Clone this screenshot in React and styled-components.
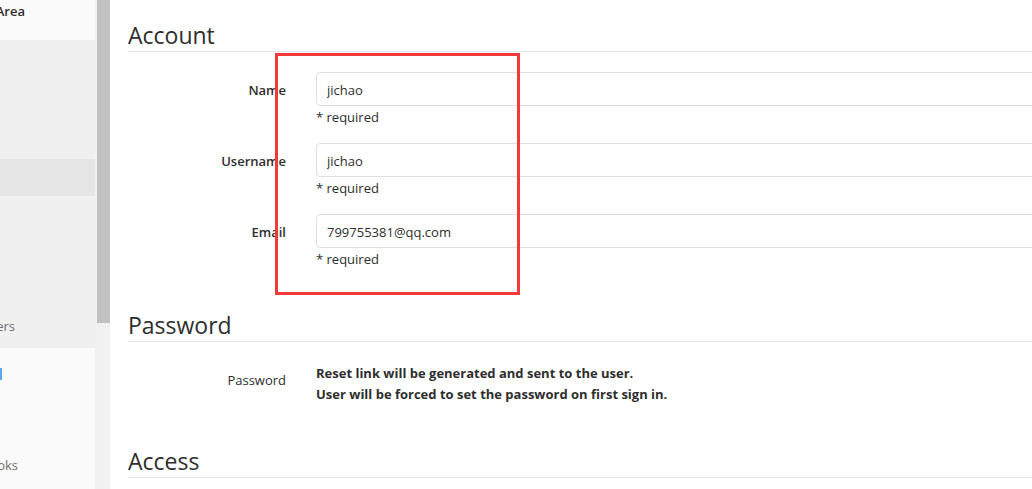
import styled, { createGlobalStyle } from "styled-components";

const GlobalStyle = createGlobalStyle`
  html, body {
    margin: 0;
    padding: 0;
    background: #fff;
  }
  body {
    font-family: "Open Sans", "Noto Sans", sans-serif;
    font-size: 13px;
    color: #2e2e2e;
  }
`;

function App() {
  return (
    <>
      <GlobalStyle />
      <Page>
        <Sidebar>
          <SideHeader>
            <SideLabel $end={25} $bold>
              Admin Area
            </SideLabel>
          </SideHeader>
          <SubMenu>
            <SubSpacer $h={119} />
            <ActiveRow />
            <SubSpacer $h={111} />
            <SideLabel $end={15} $h={38}>
              Gitaly Servers
            </SideLabel>
            <SubSpacer $h={3} />
          </SubMenu>
          <SideRest>
            <BlueMark />
            <SubSpacer $h={66} />
            <SideLabel $end={18} $h={38}>
              System Hooks
            </SideLabel>
          </SideRest>
        </Sidebar>
        <Scrollbar>
          <Thumb />
        </Scrollbar>
        <Main>
          <Section>
            <Heading>Account</Heading>
            <Row>
              <Label>Name</Label>
              <Field>
                <Input defaultValue="jichao" />
                <Help>* required</Help>
              </Field>
            </Row>
            <Row>
              <Label>Username</Label>
              <Field>
                <Input defaultValue="jichao" />
                <Help>* required</Help>
              </Field>
            </Row>
            <Row>
              <Label>Email</Label>
              <Field>
                <Input defaultValue="799755381@qq.com" />
                <Help>* required</Help>
              </Field>
            </Row>
          </Section>
          <Section>
            <Heading>Password</Heading>
            <Row>
              <Label $light>Password</Label>
              <Note>
                Reset link will be generated and sent to the user.
                <br />
                User will be forced to set the password on first sign in.
              </Note>
            </Row>
          </Section>
          <Section>
            <Heading>Access</Heading>
          </Section>
        </Main>
        <Highlight />
      </Page>
    </>
  );
}

export default App;

const Page = styled.div`
  position: relative;
  display: flex;
  width: 100vw;
  height: 100vh;
  overflow: hidden;
`;

const Sidebar = styled.div`
  display: flex;
  flex-direction: column;
  flex: 0 0 95px;
  width: 95px;
  min-width: 0;
  overflow: hidden;
  background: #fafafa;
`;

const SideHeader = styled.div`
  height: 40px;
  background: #fafafa;
`;

const SideLabel = styled.div`
  display: flex;
  justify-content: flex-end;
  align-items: ${(p) => (p.$h ? "center" : "flex-start")};
  height: ${(p) => (p.$h ? `${p.$h}px` : "auto")};
  padding-right: ${(p) => 95 - p.$end}px;
  overflow: hidden;
  white-space: nowrap;
  font-size: 13px;
  line-height: 22px;
  font-weight: ${(p) => (p.$bold ? 600 : 400)};
  color: ${(p) => (p.$bold ? "#2e2e2e" : "#707070")};
`;

const SubMenu = styled.div`
  display: flex;
  flex-direction: column;
  background: #f0f0f0;
`;

const SubSpacer = styled.div`
  height: ${(p) => p.$h}px;
  flex-shrink: 0;
`;

const ActiveRow = styled.div`
  height: 37px;
  flex-shrink: 0;
  background: #e6e6e6;
`;

const SideRest = styled.div`
  display: flex;
  flex-direction: column;
  flex: 1;
  padding-top: 20px;
`;

const BlueMark = styled.div`
  width: 2px;
  height: 12px;
  flex-shrink: 0;
  background: #5fa8e8;
`;

const Scrollbar = styled.div`
  flex: 0 0 15px;
  padding-left: 2px;
  box-sizing: border-box;
  background: #f1f1f1;
`;

const Thumb = styled.div`
  height: 323px;
  background: #c1c1c1;
`;

const Main = styled.div`
  flex: 0 0 auto;
  width: 1000px;
  padding: 22px 0 0 18px;
`;

const Section = styled.section`
  & + & {
    margin-top: 43px;
  }
`;

const Heading = styled.h3`
  margin: 0 0 20px;
  padding-bottom: 3px;
  border-bottom: 1px solid #e5e5e5;
  font-size: 23px;
  line-height: 26px;
  font-weight: 400;
  color: #2e2e2e;
`;

const Row = styled.div`
  display: grid;
  grid-template-columns: 158px 1fr;
  column-gap: 30px;
  margin-bottom: 16px;
`;

const Label = styled.label`
  padding-top: 8px;
  text-align: right;
  font-size: 13px;
  line-height: 20px;
  font-weight: ${(p) => (p.$light ? 400 : 600)};
`;

const Field = styled.div`
  display: flex;
  flex-direction: column;
`;

const Input = styled.input`
  height: 34px;
  box-sizing: border-box;
  padding: 7px 10px 5px;
  border: 1px solid #dfdfdf;
  border-radius: 4px;
  font-family: inherit;
  font-size: 13px;
  color: #2e2e2e;
  outline: none;
`;

const Help = styled.div`
  margin-top: 1px;
  font-size: 13px;
  line-height: 20px;
  color: #2e2e2e;
`;

const Note = styled.div`
  padding-top: 1px;
  font-size: 13px;
  line-height: 21px;
  font-weight: 700;
`;

const Highlight = styled.div`
  position: absolute;
  left: 275px;
  top: 53px;
  width: 245px;
  height: 242px;
  box-sizing: border-box;
  border: 3px solid #f23a3a;
  pointer-events: none;
`;
